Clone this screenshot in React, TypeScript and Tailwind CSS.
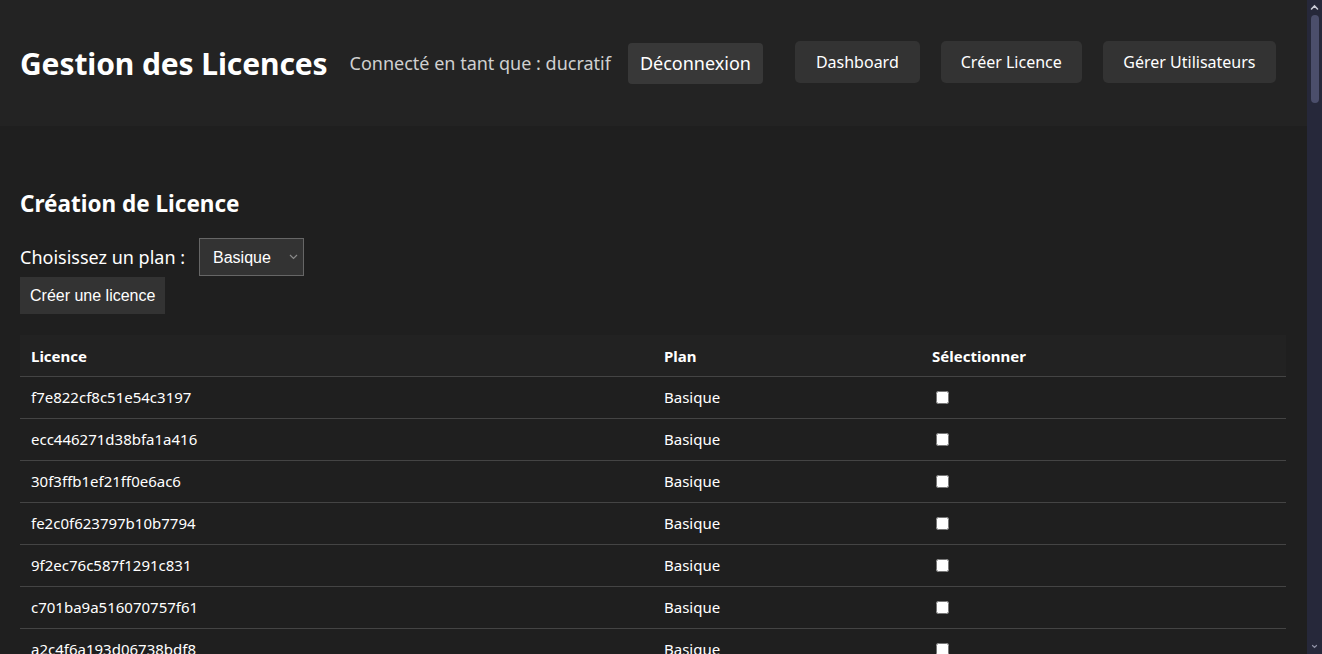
import React from "react";

const FIRST = [
  "f7e822cf8c51e54c3197",
  "ecc446271d38bfa1a416",
  "30f3ffb1ef21ff0e6ac6",
  "fe2c0f623797b10b7794",
  "9f2ec76c587f1291c831",
  "c701ba9a516070757f61",
  "a2c4f6a193d06738bdf8",
];

function makeKeys(n: number): string[] {
  const out = [...FIRST];
  let seed = 123456789;
  const hex = "0123456789abcdef";
  while (out.length < n) {
    let s = "";
    for (let i = 0; i < 20; i++) {
      seed = (seed * 1103515245 + 12345) % 2147483648;
      s += hex[Math.floor((seed / 2147483648) * 16)];
    }
    out.push(s);
  }
  return out;
}

const KEYS = makeKeys(101);

const seg = { fontFamily: '"Noto Sans", "Open Sans", sans-serif' };
const arial = { fontFamily: '"Liberation Sans", Arial, sans-serif' };

function ScrollBar() {
  return (
    <div className="w-[15px] h-screen shrink-0 bg-[#26283a] flex flex-col items-center">
      <svg width="15" height="15" viewBox="0 0 15 15" className="shrink-0">
        <path d="M4.5 9L7.5 6L10.5 9" stroke="#c9cad6" strokeWidth="1.6" fill="none" strokeLinecap="round" />
      </svg>
      <div className="w-[8px] h-[88px] rounded-[4px] bg-[#4b4e6b]" />
      <div className="flex-1" />
      <svg width="15" height="15" viewBox="0 0 15 15" className="shrink-0">
        <path d="M5.5 6.5L7.5 8.5L9.5 6.5" stroke="#8d8fa3" strokeWidth="1.2" fill="none" strokeLinecap="round" />
      </svg>
    </div>
  );
}

export default function App() {
  return (
    <div className="h-screen flex overflow-hidden bg-[#1f1f1f]">
      <div
        className="flex-1 min-w-0 h-screen overflow-y-auto [scrollbar-width:none] bg-[#1f1f1f] text-white"
        style={seg}
      >
        <header className="h-[126px] bg-[#232323] flex items-center justify-between pl-[20px] pr-[31px]">
          <div className="flex items-center">
            <h1 className="text-[30px] font-bold leading-none tracking-[-0.1px] mt-[2px]">Gestion des Licences</h1>
            <span className="ml-[22px] text-[18px] text-[#d0d0d0] mt-[1px]">Connecté en tant que : ducratif</span>
            <button className="ml-[17px] h-[41px] px-[12px] rounded-[4px] bg-[#383838] text-[18px] text-white">
              Déconnexion
            </button>
          </div>
          <nav className="flex items-center gap-[21px] -mt-[2px]">
            <button className="h-[42px] px-[21px] rounded-[5px] bg-[#333333] text-[16px]">Dashboard</button>
            <button className="h-[42px] px-[20px] rounded-[5px] bg-[#333333] text-[16px]">Créer Licence</button>
            <button className="h-[42px] px-[20.5px] rounded-[5px] bg-[#333333] text-[16px]">Gérer Utilisateurs</button>
          </nav>
        </header>

        <main className="pl-[20px] pr-[21px] pt-[63px] pb-[20px]">
          <h2 className="text-[22.5px] font-bold leading-[30px]">Création de Licence</h2>
          <div className="mt-[19px] flex items-center">
            <label className="text-[18px]">Choisissez un plan :</label>
            <div className="relative ml-[14px]">
              <select
                className="appearance-none h-[38px] w-[105px] bg-[#333333] border border-[#666666] pl-[13px] pt-[1px] text-[16px] text-white outline-none"
                style={arial}
                defaultValue="basique"
              >
                <option value="basique">Basique</option>
                <option value="premium">Premium</option>
              </select>
              <svg
                className="absolute right-[6px] top-[16px] pointer-events-none"
                width="9"
                height="6"
                viewBox="0 0 9 6"
                fill="none"
              >
                <path d="M1 1l3.5 3.5L8 1" stroke="#8a8a8a" strokeWidth="1.2" />
              </svg>
            </div>
          </div>
          <button
            className="mt-[1px] h-[37px] px-[10px] bg-[#333333] text-[16px] text-white"
            style={arial}
          >
            Créer une licence
          </button>

          <table className="mt-[21px] w-full border-collapse text-[15px]">
            <thead>
              <tr className="bg-[#222222] border-b border-[#444444]">
                <th className="h-[41px] w-[633px] px-[11px] pt-[1px] text-left font-bold">Licence</th>
                <th className="h-[41px] w-[268px] px-[11px] pt-[1px] text-left font-bold">Plan</th>
                <th className="h-[41px] px-[11px] pt-[1px] text-left font-bold">Sélectionner</th>
              </tr>
            </thead>
            <tbody>
              {KEYS.map((k) => (
                <tr key={k} className="border-b border-[#444444]">
                  <td className="h-[42px] px-[11px] pt-[1px]">{k}</td>
                  <td className="h-[42px] px-[11px] pt-[1px]">Basique</td>
                  <td className="h-[42px] px-[11px]">
                    <input type="checkbox" className="block ml-[4px] w-[13px] h-[13px]" />
                  </td>
                </tr>
              ))}
            </tbody>
          </table>
        </main>
      </div>
      <ScrollBar />
    </div>
  );
}
